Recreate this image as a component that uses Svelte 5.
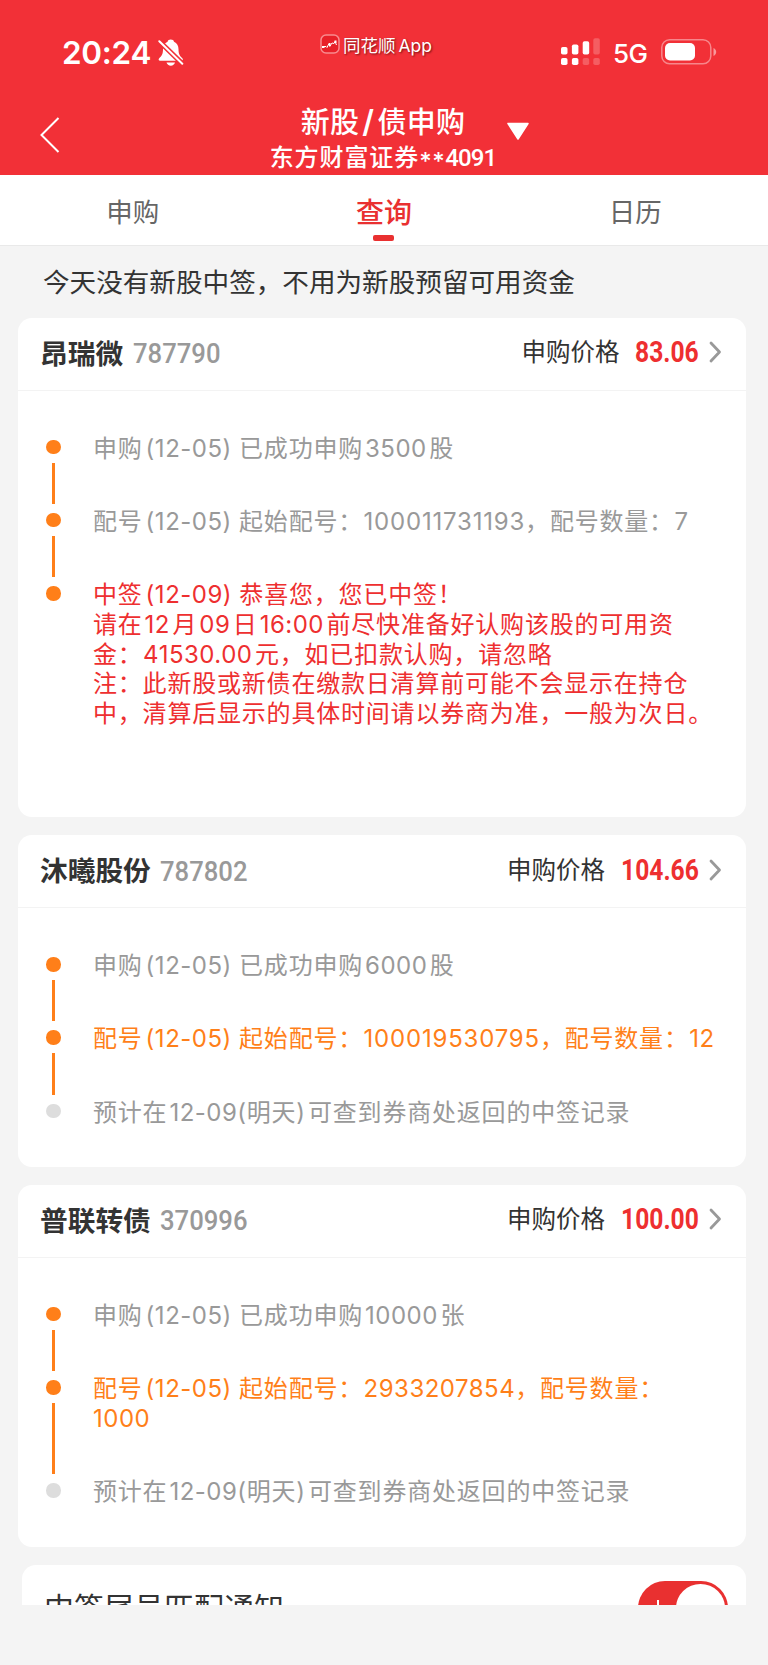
<script>
  let tabs = ["申购", "查询", "日历"];
  let activeTab = "查询";

  let records = [
    {
      name: "昂瑞微",
      code: "787790",
      price: "83.06",
      tall: true,
      steps: [
        { lines: ["申购(12-05) 已成功申购3500股"], state: "done" },
        { lines: ["配号(12-05) 起始配号：100011731193，配号数量：7"], state: "done" },
        {
          lines: [
            "中签(12-09) 恭喜您，您已中签！",
            "请在12月09日16:00前尽快准备好认购该股的可用资",
            "金：41530.00元，如已扣款认购，请忽略",
            "注：此新股或新债在缴款日清算前可能不会显示在持仓",
            "中，清算后显示的具体时间请以券商为准，一般为次日。"
          ],
          state: "win"
        }
      ]
    },
    {
      name: "沐曦股份",
      code: "787802",
      price: "104.66",
      steps: [
        { lines: ["申购(12-05) 已成功申购6000股"], state: "done" },
        { lines: ["配号(12-05) 起始配号：100019530795，配号数量：12"], state: "current" },
        { lines: ["预计在12-09(明天)可查到券商处返回的中签记录"], state: "waiting" }
      ]
    },
    {
      name: "普联转债",
      code: "370996",
      price: "100.00",
      steps: [
        { lines: ["申购(12-05) 已成功申购10000张"], state: "done" },
        { lines: ["配号(12-05) 起始配号：2933207854，配号数量：", "1000"], state: "current" },
        { lines: ["预计在12-09(明天)可查到券商处返回的中签记录"], state: "waiting" }
      ]
    }
  ];

  // split a line so that digits and brackets get the latin face,
  // with a small gap only where they touch a full-width character
  function runs(line) {
    const parts = line.split(/([0-9().:\- ]+)/).filter((part) => part !== "");
    return parts.map((part, i) => ({
      text: part,
      latin: /^[0-9().:\- ]+$/.test(part),
      before: i > 0 && !parts[i - 1].endsWith("：") && part !== ")",
      after: i < parts.length - 1 && !parts[i + 1].startsWith("，") && !part.endsWith("(") && !part.endsWith(" "),
      colon: i > 0 && parts[i - 1].endsWith("："),
      bracket: part.startsWith("("),
      long: part.length > 11
    }));
  }
</script>

<div class="page">
  <header>
    <div class="status">
      <div class="clock">
        <span class="time">20:24</span>
        <svg width="26" height="28" viewBox="0 0 26 28">
          <path d="M12.800 0.400c-1.700 0-3 .9-3.200 2.300C6.500 4 5 6.900 5 10.200c0 4.500-1.100 6.600-3.800 9-1 1-.6 2.600.9 2.600h21.300c1.500 0 1.900-1.600.9-2.600-2.700-2.400-3.800-4.500-3.800-9 0-3.300-1.400-6.200-4.500-7.500-.2-1.400-1.500-2.300-3.200-2.300z" fill="#fff" />
          <path d="M8.500 23.500h8.500c-.5 2-2.200 3.200-4.200 3.200s-3.800-1.200-4.300-3.200z" fill="#fff" />
          <path d="M1.300 2.200L24.300 24.700" stroke="#f23037" stroke-width="5" />
          <path d="M1.300 2.200L24.300 24.700" stroke="#fff" stroke-width="2" stroke-linecap="round" />
        </svg>
      </div>
      <div class="source">
        <svg width="20" height="20" viewBox="0 0 20 20">
          <rect x="1" y="1" width="18" height="18" rx="5" fill="#e82029" stroke="#f88b8f" stroke-width="1.500" />
          <path d="M3 12.500h3l1 1 2-4 1 2.500 2-3 2 .5 1-2 1.500 3.500" fill="none" stroke="#fff" stroke-width="1" />
          <path d="M2 12h2.500v2H2zM9 9h1.500v3.500H9zM14.500 6.500h2v2.500h-2z" fill="#fff" />
        </svg>
        <span>同花顺<i>App</i></span>
      </div>
      <div class="signals">
        <svg width="40" height="28" viewBox="0 0 40 28" fill="#fff">
          <rect x="1" y="9" width="6.500" height="7.500" rx="1.800" />
          <rect x="11.900" y="6.500" width="6.500" height="10" rx="1.800" />
          <rect x="22.700" y="3.300" width="6.500" height="13.200" rx="1.800" />
          <rect x="33.300" y="0.300" width="6.500" height="16.200" rx="1.800" opacity=".22" />
          <rect x="1" y="20" width="6.500" height="7" rx="1.800" />
          <rect x="11.900" y="20" width="6.500" height="7" rx="1.800" />
          <rect x="22.700" y="20" width="6.500" height="7" rx="1.800" opacity=".22" />
          <rect x="33.300" y="20" width="6.500" height="7" rx="1.800" opacity=".22" />
        </svg>
        <span class="net">5G</span>
        <svg width="56" height="26" viewBox="0 0 56 26">
          <rect x="0.800" y="0.800" width="49" height="24" rx="7.800" fill="none" stroke="#fff" stroke-opacity=".42" stroke-width="1.500" />
          <rect x="4" y="4" width="30" height="17.500" rx="5" fill="#fff" />
          <path d="M52.500 9c3.600 1.500 3.600 6.500 0 8z" fill="#fff" fill-opacity=".5" />
        </svg>
      </div>
    </div>
    <div class="navbar">
      <svg class="back" width="20" height="36" viewBox="0 0 20 36">
        <path d="M18.500 1L1.500 18L18.500 35" fill="none" stroke="#fff" stroke-width="2" />
      </svg>
      <div class="titles">
        <h1>新股<b>/</b>债申购</h1>
        <p>东方财富证券<span class="stars">**</span><span class="acct">4091</span></p>
      </div>
      <svg class="caret" width="24" height="19" viewBox="0 0 24 19">
        <path d="M2 1.500h20L12 17z" fill="#fff" stroke="#fff" stroke-width="1.500" stroke-linejoin="round" />
      </svg>
    </div>
  </header>

  <nav>
    {#each tabs as tab}
      <button class:active={tab === activeTab}>{tab}</button>
    {/each}
  </nav>

  <p class="notice">今天没有新股中签，不用为新股预留可用资金</p>

  <main>
    {#each records as record}
      <section class="card" class:tall={record.tall}>
        <div class="cardHead">
          <h2>{record.name}</h2>
          <span class="code"><span>{record.code}</span></span>
          <span class="label">申购价格</span>
          <span class="price" class:short={record.price.length < 6}><span>{record.price}</span></span>
          <svg width="13" height="22" viewBox="0 0 13 22">
            <path d="M2 2l8.500 9L2 20" fill="none" stroke="#999" stroke-width="2.800" stroke-linecap="round" stroke-linejoin="round" />
          </svg>
        </div>
        <ul>
          {#each record.steps as step}
            <li class={step.state}>
              <div class="rail">
                <span class="dot"></span>
                <span class="line"></span>
              </div>
              <div class="text">
                {#each step.lines as line}
                  <p>{#each runs(line) as part}{#if part.latin}<span class="num" class:before={part.before} class:after={part.after} class:colon={part.colon} class:bracket={part.bracket} class:long={part.long}>{part.text}</span>{:else}{part.text}{/if}{/each}</p>
                {/each}
              </div>
            </li>
          {/each}
        </ul>
      </section>
    {/each}

    <section class="notify">
      <span>中签尾号匹配通知</span>
      <div class="toggle"><i></i><b></b></div>
    </section>
  </main>
</div>

<style>
  :global(body) {
    background: #f4f4f4;
  }

  .page {
    height: 1665px;
    overflow: hidden;
    background: #f4f4f4;
    color: #333;
    font-family: Inter, "Noto Sans CJK SC", sans-serif;
  }

  h1, h2, p, ul {
    margin: 0;
    padding: 0;
    font-weight: 400;
  }

  header {
    height: 174.5px;
    background: #f23037;
    color: #fff;
  }

  .status {
    display: grid;
    grid-template-columns: 320px 1fr 208px;
    height: 105px;
  }

  .clock {
    display: flex;
    align-items: flex-start;
    padding: 39px 0 0 62px;
    gap: 7px;
  }

  .time {
    width: 89px;
    font-size: 31.5px;
    line-height: 28px;
    font-weight: 600;
    letter-spacing: -0.3px;
  }

  .source {
    display: flex;
    align-items: flex-start;
    gap: 3px;
    padding-top: 34px;
    font-family: "Noto Sans CJK SC", sans-serif;
    font-size: 17.5px;
    line-height: 22px;
    text-shadow: 1px 1px 2px rgba(70, 0, 0, 0.7);
    white-space: nowrap;
  }

  .source i {
    margin-left: 3px;
    font-family: Inter, sans-serif;
    font-style: normal;
  }

  .signals {
    display: flex;
    align-items: flex-start;
    padding-top: 38px;
  }

  .net {
    width: 35px;
    margin: 3px 13px 0 13px;
    font-size: 26px;
    line-height: 26px;
    font-weight: 500;
    letter-spacing: -0.5px;
  }

  .signals svg:last-child {
    margin-top: 1px;
  }

  .navbar {
    display: grid;
    grid-template-columns: 230px 306px 1fr;
  }

  .back {
    margin: 12px 0 0 40px;
  }

  .caret {
    margin: 17px 0 0 -30px;
  }

  .titles {
    margin-top: -3px;
    text-align: center;
    white-space: nowrap;
  }

  h1 {
    font-family: "Noto Sans CJK SC", sans-serif;
    font-size: 29px;
    line-height: 36px;
    font-weight: 500;
    letter-spacing: 0.3px;
  }

  h1 b {
    margin: 0 3px;
    font-family: Inter, sans-serif;
    font-size: 31px;
    font-weight: 600;
  }

  .titles p {
    margin-top: 1px;
    font-size: 24px;
    line-height: 34px;
    font-weight: 500;
    letter-spacing: 0.9px;
  }

  .stars {
    font-family: Inter, sans-serif;
    letter-spacing: 0.6px;
    vertical-align: -4px;
    line-height: 1px;
  }

  .acct {
    font-family: Roboto, sans-serif;
    letter-spacing: -0.9px;
  }

  nav {
    display: grid;
    grid-template-columns: repeat(3, 1fr);
    height: 70.5px;
    padding: 0 7px;
    background: #fff;
    border-bottom: 1px solid #e9e9e9;
  }

  nav button {
    display: flex;
    flex-direction: column;
    align-items: center;
    padding: 16px 0 0;
    border: 0;
    background: none;
    color: #666;
    font-family: "Noto Sans CJK SC", sans-serif;
    font-size: 26.5px;
    line-height: 40px;
  }

  nav .active {
    color: #e93030;
    font-size: 28px;
    font-weight: 500;
  }

  nav .active::after {
    content: "";
    width: 21px;
    height: 6px;
    margin-top: 4px;
    border-radius: 2px;
    background: #e93030;
  }

  .notice {
    padding: 16px 0 15.500px 43px;
    font-size: 26.6px;
    line-height: 40px;
  }

  main {
    display: flex;
    flex-direction: column;
    gap: 18px;
    padding: 0 22px 0 18px;
  }

  .card {
    box-sizing: border-box;
    padding-bottom: 41.500px;
    border-radius: 14px;
    background: #fff;
  }

  .tall {
    padding-bottom: 90px;
  }

  .cardHead {
    display: flex;
    align-items: center;
    height: 72px;
    padding: 0 24px 0 22px;
    border-bottom: 1px solid #f3f3f3;
    white-space: nowrap;
  }

  h2 {
    padding-bottom: 4px;
    font-family: "Noto Sans CJK SC", sans-serif;
    font-size: 27.7px;
    line-height: 40px;
    font-weight: 700;
  }

  .code,
  .price {
    font-family: Roboto, sans-serif;
    line-height: 40px;
    font-weight: 500;
  }

  .code {
    flex: 1;
    padding: 1px 0 0 9.500px;
    color: #999;
    font-size: 28.5px;
  }

  .code span,
  .price span {
    display: inline-block;
    transform: scaleX(0.9);
    transform-origin: 0 50%;
  }

  .label {
    padding-bottom: 3px;
    font-size: 24.5px;
    line-height: 40px;
  }

  .price {
    box-sizing: border-box;
    width: 97px;
    margin-right: 3px;
    padding: 0 0 3px 16px;
    color: #ee2f30;
    font-size: 29px;
    font-weight: 700;
  }

  .price span {
    transform: scaleX(0.85);
  }

  .price.short {
    width: 82.5px;
    padding-left: 15px;
  }

  .price + svg {
    margin: 0 0 3px 4px;
  }

  ul {
    padding-top: 41px;
    list-style: none;
  }

  li {
    display: grid;
    grid-template-columns: 75px 1fr;
    padding-bottom: 43.5px;
    color: #999;
  }

  li:last-child {
    padding-bottom: 0;
  }

  .rail {
    display: flex;
    flex-direction: column;
    align-items: center;
    gap: 8.500px;
    width: 15px;
    margin: 8px 0 -42.500px 28px;
  }

  .dot {
    width: 14.500px;
    height: 14.500px;
    border-radius: 50%;
    background: #ff7f19;
  }

  .line {
    flex: 1;
    width: 2.500px;
    background: #ff7f19;
  }

  li:last-child .rail {
    margin-bottom: 0;
  }

  li:last-child .line {
    display: none;
  }

  .text {
    font-family: "Noto Sans CJK SC", sans-serif;
    font-size: 24px;
    line-height: 29.8px;
    letter-spacing: 0.8px;
    white-space: pre;
  }

  .text p {
    height: 29.8px;
  }

  .num {
    font-family: Inter, sans-serif;
    letter-spacing: 0.5px;
  }

  .before {
    margin-left: 2px;
  }

  .after {
    margin-right: 2.500px;
  }

  .colon {
    margin-left: 0.500px;
  }

  .bracket {
    margin-left: 3px;
  }

  .long {
    letter-spacing: 0.8px;
  }

  .current {
    color: #ff7f19;
  }

  .win {
    color: #ee2f30;
  }

  .waiting .dot {
    background: #ddd;
  }

  .notify {
    display: flex;
    justify-content: space-between;
    height: 40px;
    margin: 0 0 0 4px;
    padding: 0 18px 0 22px;
    overflow: hidden;
    border-radius: 14px 14px 0 0;
    background: #fff;
    box-sizing: border-box;
  }

  .notify span {
    padding-top: 20px;
    font-family: "Noto Sans CJK SC", sans-serif;
    font-size: 30px;
    line-height: 42px;
  }

  .toggle {
    display: flex;
    align-items: center;
    justify-content: space-between;
    box-sizing: border-box;
    width: 90px;
    height: 54px;
    margin-top: 16px;
    padding: 0 3px 0 19px;
    border-radius: 27px;
    background: #e93030;
  }

  .toggle i {
    width: 1.500px;
    height: 16px;
    background: #fff;
  }

  .toggle b {
    width: 49px;
    height: 48px;
    border-radius: 50%;
    background: #fff;
  }
</style>
